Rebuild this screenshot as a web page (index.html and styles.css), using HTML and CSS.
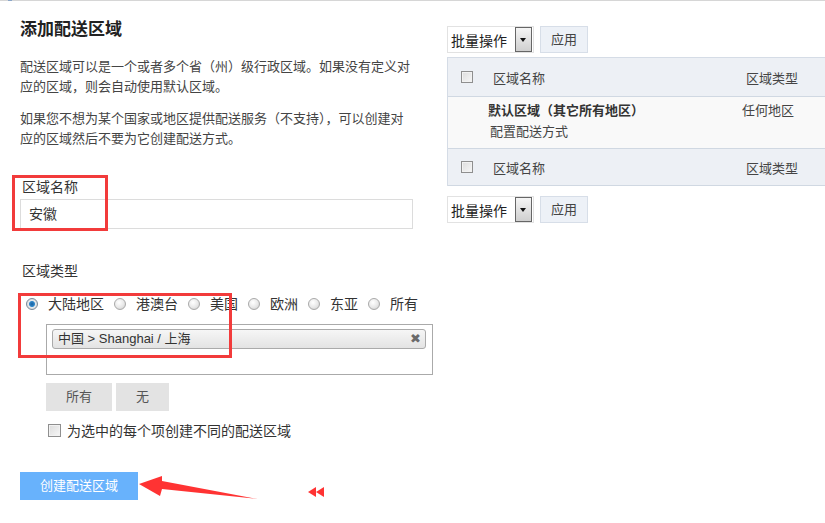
FILE: index.html
```html
<!DOCTYPE html>
<html lang="zh-CN">
<head>
<meta charset="utf-8">
<title>添加配送区域</title>
<link rel="stylesheet" href="styles.css">
</head>
<body>
<div class="topbar"><span class="topbar-accent"></span></div>
<div class="page">
  <div class="left">
    <h1 class="title">添加配送区域</h1>
    <p class="desc desc1">配送区域可以是一个或者多个省（州）级行政区域。如果没有定义对<br>应的区域，则会自动使用默认区域。</p>
    <p class="desc desc2">如果您不想为某个国家或地区提供配送服务（不支持），可以创建对<br>应的区域然后不要为它创建配送方式。</p>
    <div class="field-label f1">区域名称</div>
    <div class="text-input">安徽</div>
    <div class="field-label f2">区域类型</div>
    <div class="radios">
      <span class="radio checked"></span><span class="rlabel">大陆地区</span>
      <span class="radio"></span><span class="rlabel">港澳台</span>
      <span class="radio"></span><span class="rlabel">美国</span>
      <span class="radio"></span><span class="rlabel">欧洲</span>
      <span class="radio"></span><span class="rlabel">东亚</span>
      <span class="radio"></span><span class="rlabel">所有</span>
    </div>
    <div class="tagbox">
      <div class="tag"><span class="tag-text">中国 &gt; Shanghai / 上海</span><span class="tag-x">&#x2716;</span></div>
    </div>
    <div class="btnrow">
      <span class="gbtn btn-all">所有</span>
      <span class="gbtn btn-none">无</span>
    </div>
    <div class="checkrow"><span class="cb"></span><span>为选中的每个项创建不同的配送区域</span></div>
    <div class="primary">创建配送区域</div>
  </div>
  <div class="right">
    <div class="bulk">
      <div class="select"><span class="select-text">批量操作</span><span class="select-arrow"></span></div>
      <span class="apply">应用</span>
    </div>
    <div class="table">
      <div class="trow thead">
        <div class="c-check"><span class="cb small"></span></div>
        <div class="c-name">区域名称</div>
        <div class="c-type">区域类型</div>
      </div>
      <div class="trow tbody">
        <div class="c-check"></div>
        <div class="c-name body-name">
          <div class="zone-name">默认区域（其它所有地区）</div>
          <div class="zone-link">配置配送方式</div>
        </div>
        <div class="c-type body-type">任何地区</div>
      </div>
      <div class="trow thead tfoot">
        <div class="c-check"><span class="cb small"></span></div>
        <div class="c-name">区域名称</div>
        <div class="c-type">区域类型</div>
      </div>
    </div>
    <div class="bulk bulk2">
      <div class="select"><span class="select-text">批量操作</span><span class="select-arrow"></span></div>
      <span class="apply">应用</span>
    </div>
  </div>
</div>
<div class="mark mark1"></div>
<div class="mark mark2"></div>
<svg class="arrow" width="200" height="40" viewBox="0 0 200 40">
  <polygon points="0,12 23,4 23,9 119,27 23,17 21,24" fill="#ff3333"/>
  <polygon points="169,20 177,15 177,25" fill="#ff3333"/>
  <polygon points="177,20 185,15 185,25" fill="#ff3333"/>
</svg>
</body>
</html>
```
FILE: styles.css
```css
* { box-sizing: border-box; }
html, body { margin: 0; padding: 0; background: #fff; overflow: hidden; }
body {
  width: 825px;
  height: 523px;
  font-family: "Liberation Sans", "Noto Sans CJK SC", sans-serif;
  color: #333;
  position: relative;
}
.topbar { height: 2px; border-top: 1px solid #d6d6d6; position: relative; }
.topbar-accent { position: absolute; left: 8px; top: -1px; width: 4px; height: 1px; background: #8aa6c8; }

.page { display: flex; align-items: flex-start; }
.left { width: 447px; padding-left: 20px; flex: none; }
.right { flex: none; width: 378px; overflow: hidden; }

.title { margin: 0; padding-top: 17px; font-size: 17px; line-height: 22px; font-weight: bold; color: #222; }
.desc { margin: 0; font-size: 13px; line-height: 20px; color: #444; }
.desc1 { margin-top: 16px; }
.desc2 { margin-top: 12px; }

.field-label { font-size: 14px; line-height: 20px; padding-left: 2px; color: #333; }
.f1 { margin-top: 28px; }
.f2 { margin-top: 32px; }
.text-input {
  margin-top: 2px; width: 393px; height: 30px; border: 1px solid #dcdcdc;
  font-size: 14px; line-height: 28px; padding-left: 8px; color: #333;
}

.radios { margin-top: 13px; height: 20px; display: flex; align-items: center; font-size: 14px; padding-left: 6px; }
.radio {
  width: 12px; height: 12px; border-radius: 50%; flex: none;
  border: 1px solid #a9a9a9;
  background: radial-gradient(circle at 40% 35%, #ffffff 0%, #e8e8e8 55%, #c8c8c8 100%);
}
.radio.checked {
  border-color: #7a8a99;
  background: radial-gradient(circle at 50% 50%, #1a5f9e 0, #2d86c9 2.5px, #e6e9ec 3.5px, #c4c8cc 100%);
}
.rlabel { margin-left: 10px; margin-right: 10px; line-height: 20px; color: #333; }

.tagbox {
  margin-top: 10px; margin-left: 26px; width: 387px; height: 51px;
  border: 1px solid #aaa; padding: 4px 6px 0 5px;
}
.tag {
  height: 20px; border: 1px solid #aaa; border-radius: 3px;
  background: linear-gradient(#f6f6f6, #e3e3e3);
  display: flex; align-items: center; justify-content: space-between;
  padding: 0 4px 0 5px; font-size: 13px; color: #333;
}
.tag-text { line-height: 18px; }
.tag-x { font-size: 13px; color: #6a6a6a; line-height: 18px; }

.btnrow { margin-top: 8px; margin-left: 26px; display: flex; gap: 4px; }
.gbtn {
  display: block; height: 28px; line-height: 28px; background: #e3e3e3; color: #555;
  font-size: 13px; text-align: center;
}
.btn-all { width: 66px; }
.btn-none { width: 53px; }

.checkrow { margin-top: 9px; margin-left: 28px; height: 20px; display: flex; align-items: center; font-size: 14px; color: #333; }
.cb {
  display: inline-block; width: 13px; height: 13px; flex: none;
  border: 1px solid #8f8f8f;
  background: linear-gradient(135deg, #dcdcdc, #f7f7f7);
  box-shadow: inset 0 0 0 1px #f2f2f2;
  margin-right: 6px;
}
.cb.small { width: 12px; height: 12px; margin-right: 0; }

.primary {
  margin-top: 32px; width: 118px; height: 28px; line-height: 28px;
  background: #68b2fc; color: #fff; font-size: 13px; text-align: center;
}

.bulk { display: flex; margin-top: 24px; height: 27px; }
.bulk2 { margin-top: 10px; }
.select {
  width: 87px; height: 27px; border: 1px solid #e2e2e2; display: flex; align-items: center;
  justify-content: space-between; padding: 0 1px 0 3px; background: #fff;
}
.select-text { font-size: 14px; color: #222; }
.select-arrow {
  width: 17px; height: 25px; border: 1px solid #666; position: relative;
  background: linear-gradient(#f5f5f5, #cfcfcf);
}
.select-arrow::after {
  content: ""; position: absolute; left: 4px; top: 10px;
  border-left: 3.5px solid transparent; border-right: 3.5px solid transparent; border-top: 4px solid #111;
}
.apply {
  margin-left: 6px; width: 48px; height: 27px; line-height: 25px; text-align: center;
  font-size: 13px; color: #444; background: #edf1f7; border: 1px solid #d7dee8;
}

.table { margin-top: 4px; width: 400px; border-left: 1px solid #d5dce6; border-top: 1px solid #d5dce6; }
.trow { display: flex; border-bottom: 1px solid #d0d8e2; }
.thead { height: 39px; align-items: center; background: #edf0f5; font-size: 13px; color: #444; }
.tfoot { height: 37px; }
.tbody { height: 52px; background: #f9f9f9; align-items: flex-start; }
.c-check { width: 45px; flex: none; padding-left: 13px; display: flex; align-items: center; }
.c-name { width: 253px; flex: none; padding-left: 0; }
.c-type { flex: 1; }
.body-name { padding-top: 3px; margin-left: -5px; margin-right: 5px; }
.zone-name { font-size: 13px; font-weight: bold; line-height: 22px; color: #333; }
.zone-link { font-size: 13px; line-height: 20px; color: #444; margin-left: 2px; }
.body-type { padding-top: 3px; font-size: 13px; line-height: 22px; color: #444; margin-left: -4px; }

.mark { position: absolute; border: 3px solid #f23b3b; }
.mark1 { left: 12px; top: 175px; width: 96px; height: 56px; }
.mark2 { left: 18px; top: 293px; width: 214px; height: 65px; }
.arrow { position: absolute; left: 139px; top: 472px; }
```
